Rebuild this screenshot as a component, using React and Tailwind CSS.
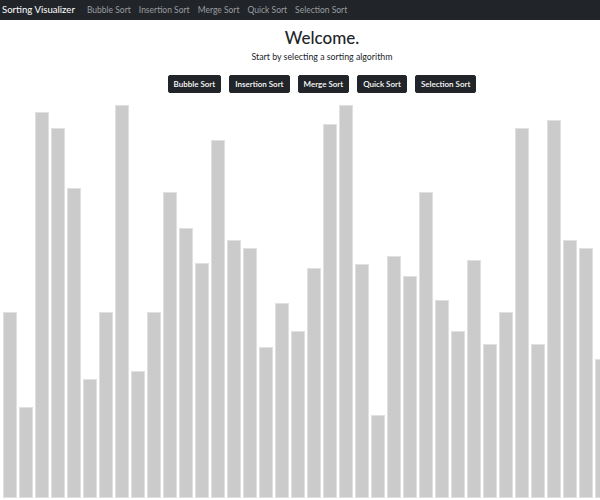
const algorithms = ['Bubble Sort', 'Insertion Sort', 'Merge Sort', 'Quick Sort', 'Selection Sort'];

const heights = [
    186, 91, 386, 370, 310, 119, 186, 393, 127, 186,
    306, 270, 235, 358, 258, 250, 151, 195, 167, 230,
    374, 393, 234, 83, 242, 222, 306, 198, 167, 238,
    154, 186, 370, 154, 378, 258, 250, 139, 290, 210,
];

const Navbar = () => (
    <nav className="h-[20px] bg-[#212529] flex items-center px-[2px]">
        <span className="text-[9.6px] text-white mr-[8px] leading-none">Sorting Visualizer</span>
        <div className="flex items-center">
            {algorithms.map((name) => (
                <a key={name} className="px-[4px] text-[8.5px] text-[#9a9da0] leading-none">{name}</a>
            ))}
        </div>
    </nav>
);

const App = () => {
    return (
        <div className="w-full min-h-[500px] bg-white overflow-hidden">
            <div className="w-[644px] font-['Lato',sans-serif]">
                <Navbar />

                <div className="flex flex-col items-center">
                    <h1 className="mt-[8px] text-[17px] font-medium text-[#212529] leading-[1.2]">Welcome.</h1>
                    <p className="mt-[2px] text-[8.8px] text-[#212529]">Start by selecting a sorting algorithm</p>
                    <div className="mt-[11px] flex gap-[8px]">
                        {algorithms.map((name) => (
                            <button
                                key={name}
                                className="h-[18px] px-[5px] rounded-[2px] bg-[#212529] border border-[#212529] text-white text-[8px] font-semibold leading-none"
                            >
                                {name}
                            </button>
                        ))}
                    </div>
                </div>

                {/* array bars */}
                <div className="mt-[8px] h-[397px] flex items-end gap-[2px] pl-[3px]">
                    {heights.map((h, i) => (
                        <div
                            key={i}
                            className="w-[14px] shrink-0 bg-[#cbcbcb] border border-[#e0e0e0]"
                            style={{ height: h }}
                        />
                    ))}
                </div>
            </div>
        </div>
    );
};

export default App;
